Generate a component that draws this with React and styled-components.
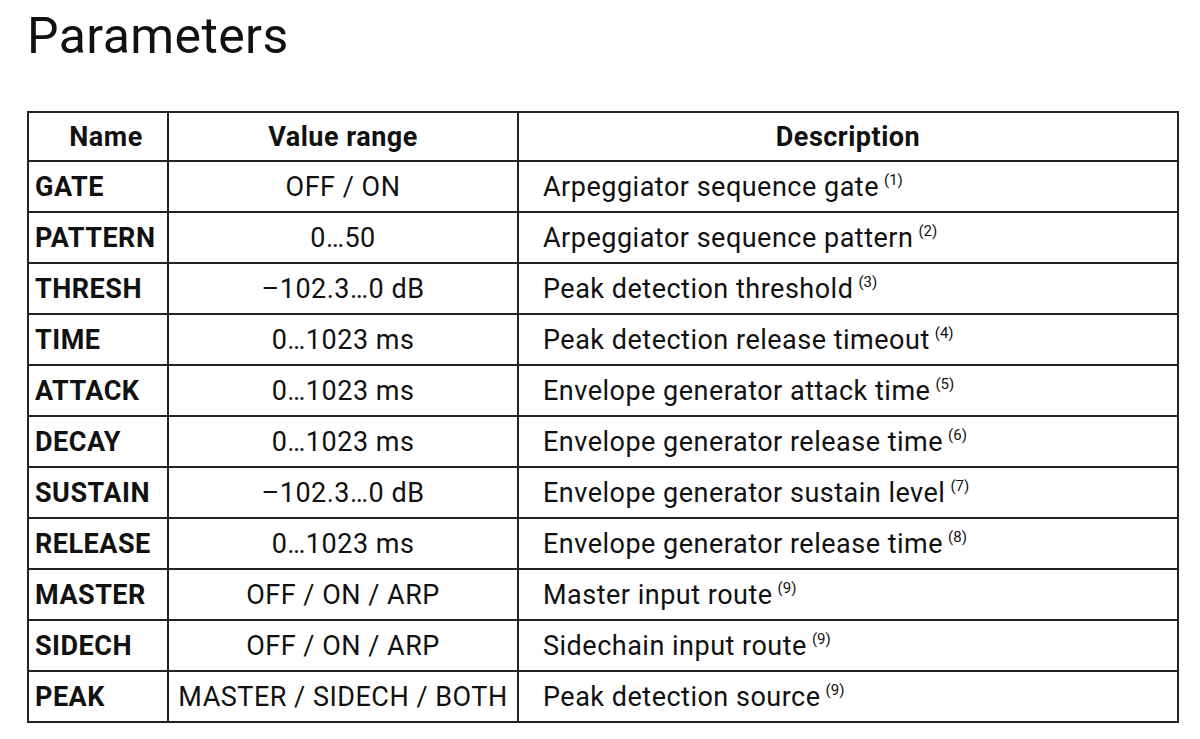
import React from 'react';
import styled, { createGlobalStyle } from 'styled-components';

const GlobalStyle = createGlobalStyle`
  body {
    margin: 0;
    background: #fff;
    font-family: Roboto, "Liberation Sans", sans-serif;
    color: #111;
  }
`;

const Page = styled.div`
  padding: 8px 0 0 27px;
`;

const Title = styled.h1`
  margin: 0 0 47px 0;
  font-size: 50px;
  line-height: 56px;
  font-weight: 400;
  letter-spacing: 0.4px;
  color: #111;
`;

const Table = styled.table`
  border-collapse: collapse;
  width: 1150px;
  table-layout: fixed;
  font-size: 27px;
  letter-spacing: 0.5px;
`;

const HeadCell = styled.th`
  border: 2px solid #222;
  height: 47px;
  padding: 0 0 0 ${p => p.$indent || 0}px;
  font-weight: 700;
  text-align: center;
  vertical-align: middle;
`;

const Cell = styled.td`
  border: 2px solid #222;
  height: 49px;
  padding: 0 ${p => p.$pad || 0}px;
  text-align: ${p => p.$align || 'left'};
  font-weight: ${p => (p.$bold ? 700 : 400)};
  vertical-align: middle;
  white-space: nowrap;
`;

const Note = styled.sup`
  font-size: 15px;
  letter-spacing: 0;
  margin-left: 5px;
  vertical-align: 11px;
  line-height: 0;
`;

const params = [
  ['GATE', 'OFF / ON', 'Arpeggiator sequence gate', 1],
  ['PATTERN', '0…50', 'Arpeggiator sequence pattern', 2],
  ['THRESH', '–102.3…0 dB', 'Peak detection threshold', 3],
  ['TIME', '0…1023 ms', 'Peak detection release timeout', 4],
  ['ATTACK', '0…1023 ms', 'Envelope generator attack time', 5],
  ['DECAY', '0…1023 ms', 'Envelope generator release time', 6],
  ['SUSTAIN', '–102.3…0 dB', 'Envelope generator sustain level', 7],
  ['RELEASE', '0…1023 ms', 'Envelope generator release time', 8],
  ['MASTER', 'OFF / ON / ARP', 'Master input route', 9],
  ['SIDECH', 'OFF / ON / ARP', 'Sidechain input route', 9],
  ['PEAK', 'MASTER / SIDECH / BOTH', 'Peak detection source', 9],
];

export default function App() {
  return (
    <Page>
      <GlobalStyle />
      <Title>Parameters</Title>
      <Table>
        <colgroup>
          <col style={{ width: 140 }} />
          <col style={{ width: 350 }} />
          <col style={{ width: 660 }} />
        </colgroup>
        <thead>
          <tr>
            <HeadCell $indent={16}>Name</HeadCell>
            <HeadCell>Value range</HeadCell>
            <HeadCell>Description</HeadCell>
          </tr>
        </thead>
        <tbody>
          {params.map(([name, range, desc, n]) => (
            <tr key={name}>
              <Cell $bold $pad={6}>{name}</Cell>
              <Cell $align="center">{range}</Cell>
              <Cell $pad={24}>
                {desc}
                <Note>({n})</Note>
              </Cell>
            </tr>
          ))}
        </tbody>
      </Table>
    </Page>
  );
}
